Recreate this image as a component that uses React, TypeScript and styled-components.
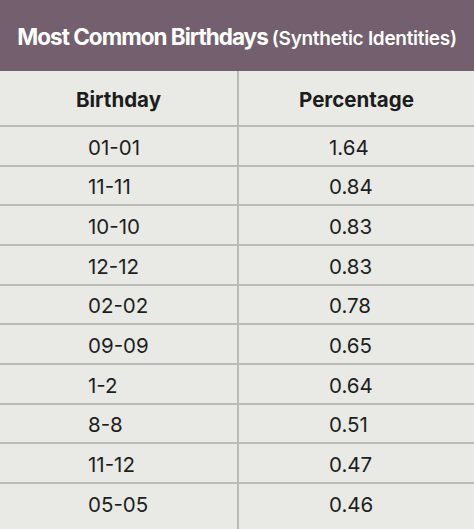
import React from 'react';
import styled, { createGlobalStyle } from 'styled-components';

const GlobalStyle = createGlobalStyle`
  html, body {
    margin: 0;
    padding: 0;
    background: #e9eae5;
  }
  body {
    font-family: Inter, "Noto Sans", sans-serif;
  }
`;

interface Row {
  birthday: string;
  percentage: string;
}

const rows: Row[] = [
  { birthday: '01-01', percentage: '1.64' },
  { birthday: '11-11', percentage: '0.84' },
  { birthday: '10-10', percentage: '0.83' },
  { birthday: '12-12', percentage: '0.83' },
  { birthday: '02-02', percentage: '0.78' },
  { birthday: '09-09', percentage: '0.65' },
  { birthday: '1-2', percentage: '0.64' },
  { birthday: '8-8', percentage: '0.51' },
  { birthday: '11-12', percentage: '0.47' },
  { birthday: '05-05', percentage: '0.46' },
];

const App: React.FC = () => {
  return (
    <>
      <GlobalStyle />
      <Wrapper>
        <Title>
          Most Common Birthdays <Sub>(Synthetic Identities)</Sub>
        </Title>
        <Table>
          <HeadCell>Birthday</HeadCell>
          <HeadCell divider>Percentage</HeadCell>
          {rows.map((row, i) => (
            <React.Fragment key={i}>
              <Cell last={i === rows.length - 1} indent={88}>
                {row.birthday}
              </Cell>
              <Cell last={i === rows.length - 1} indent={90} divider>
                {row.percentage}
              </Cell>
            </React.Fragment>
          ))}
        </Table>
      </Wrapper>
    </>
  );
};

export default App;

const Wrapper = styled.div`
  width: 474px;
  height: 529px;
  overflow: hidden;
  background: #e9eae5;
`;

const Title = styled.div`
  height: 71px;
  background: #735f6d;
  color: #ffffff;
  display: flex;
  align-items: baseline;
  justify-content: center;
  gap: 4px;
  font-size: 22.5px;
  font-weight: 700;
  letter-spacing: -1px;
  padding-top: 23px;
  box-sizing: border-box;
  white-space: nowrap;
`;

const Sub = styled.span`
  font-size: 19px;
  font-weight: 600;
  letter-spacing: -0.3px;
`;

const Table = styled.div`
  display: grid;
  grid-template-columns: 237px 1fr;
  grid-auto-rows: 39.67px;
  grid-template-rows: 54px;
`;

const HeadCell = styled.div<{ divider?: boolean }>`
  display: flex;
  align-items: center;
  justify-content: center;
  font-size: 20.5px;
  font-weight: 700;
  color: #1c1c1c;
  padding-top: 2px;
  box-sizing: border-box;
  border-left: ${(p) => (p.divider ? '2px solid #b9bbb6' : 'none')};
`;

const Cell = styled.div<{ divider?: boolean; indent: number; last?: boolean }>`
  display: flex;
  align-items: center;
  padding-left: ${(p) => p.indent}px;
  padding-top: 3px;
  padding-bottom: ${(p) => (p.last ? '7.33px' : '0')};
  font-size: 20.5px;
  font-weight: 400;
  color: #1e1e1e;
  box-sizing: border-box;
  border-top: 2px solid #b9bbb6;
  border-left: ${(p) => (p.divider ? '2px solid #b9bbb6' : 'none')};
  height: ${(p) => (p.last ? '47px' : 'auto')};
`;
